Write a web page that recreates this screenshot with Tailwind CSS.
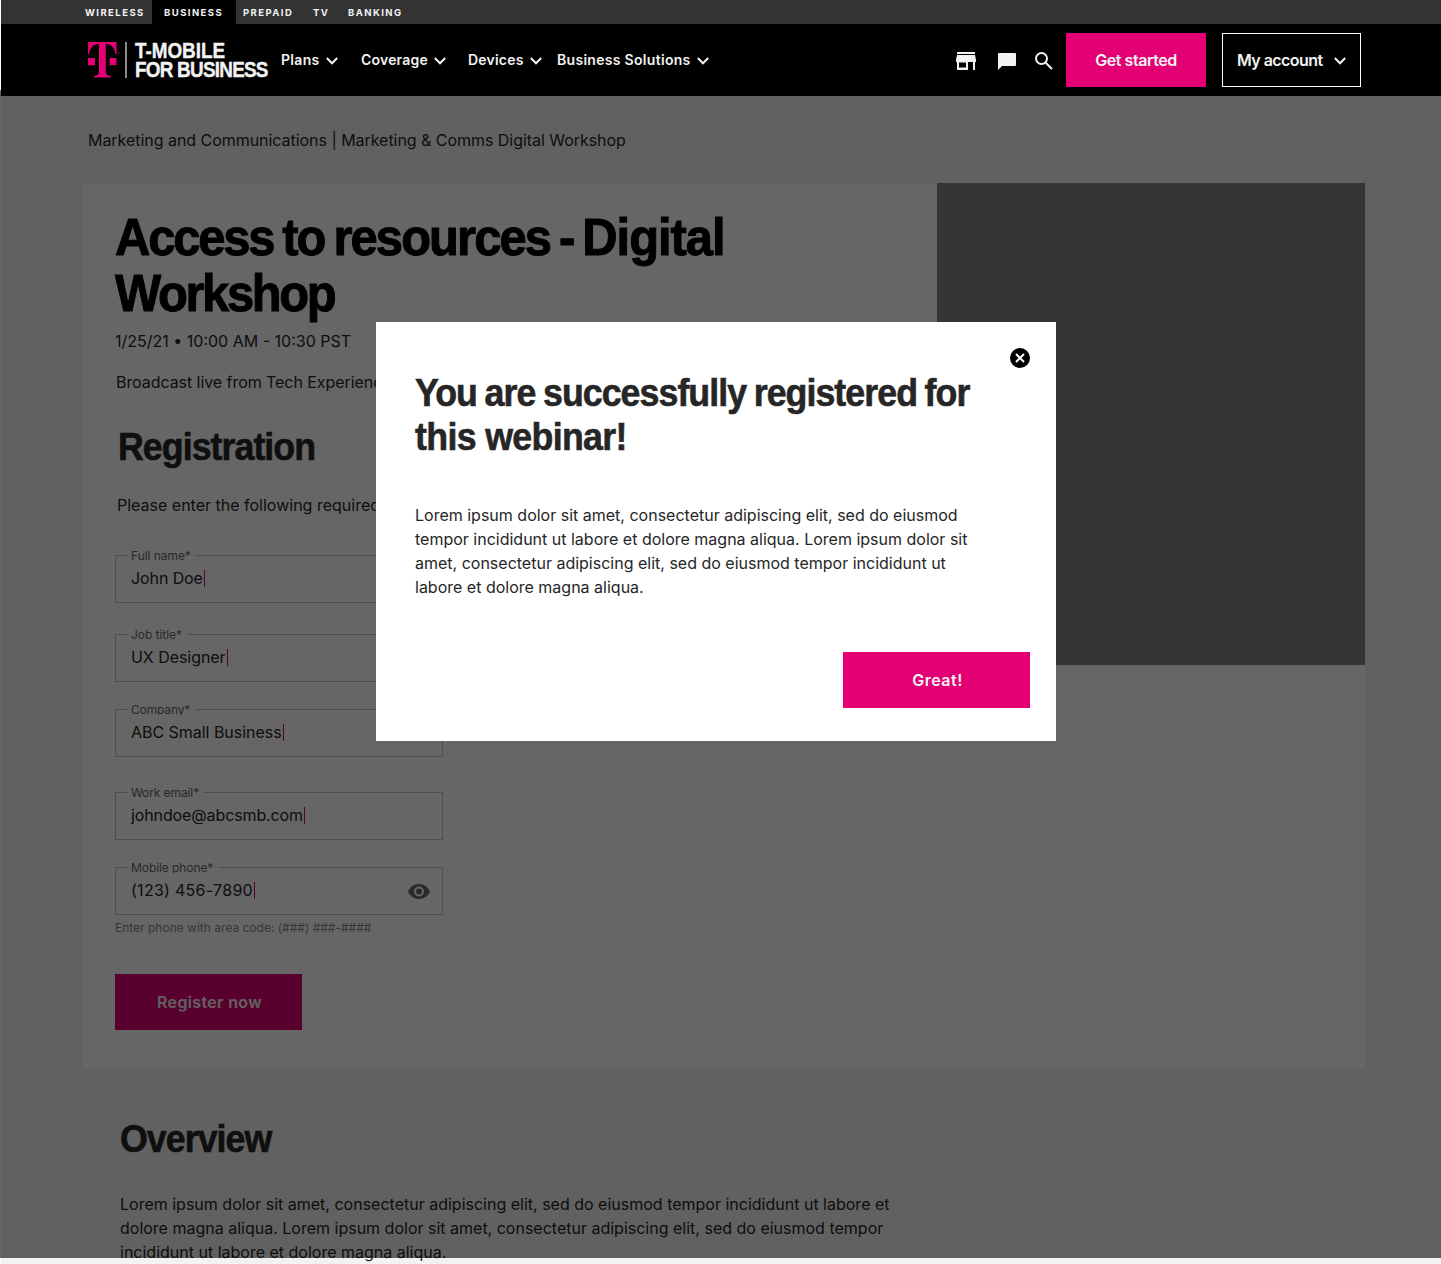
<!DOCTYPE html>
<html lang="en">
<head>
<meta charset="utf-8">
<title>T-Mobile for Business</title>
<script src="https://cdn.jsdelivr.net/npm/@tailwindcss/browser@4"></script>
</head>
<body class="h-[1264px] overflow-hidden bg-white font-['Inter',sans-serif] text-[#262626]">
<div class="relative ml-px h-[1264px] bg-[#f2f2f2]">
  <header class="relative z-20">
    <nav class="flex h-6 items-center bg-[#333] pl-[84px] text-[9.5px] font-bold leading-[25px] tracking-[1.45px] text-[#f2f2f2]">
      <a class="w-[67px]">WIRELESS</a>
      <a class="h-6 w-[84px] bg-black pl-3">BUSINESS</a>
      <a class="w-[77px] pl-[7px]">PREPAID</a>
      <a class="w-[35px]">TV</a>
      <a>BANKING</a>
    </nav>
    <div class="flex h-[72px] items-center bg-black pl-[87px] pr-20 text-[#f2f2f2]">
      <div class="flex h-9 w-[193px] items-center">
        <svg class="h-9 w-8 shrink-0" viewBox="0 0 32 36" fill="#e20074"><path d="M0 0h28.500v12h-1.200c-.7-5.500-3.300-9.600-9.500-10.200V29c0 3.400 1.200 4.600 4.900 4.800V35.500H6v-1.700c3.700-.2 4.900-1.400 4.900-4.800V1.800C4.600 2.400 1.900 6.500 1.200 12H0zM0 16h7v7.200H0zM21.500 16h7v7.200h-7zM30 10.500h1.300v1.300H30z"/></svg>
        <span class="ml-[5px] h-9 w-[2px] shrink-0 bg-[#8c8c8c]"></span>
        <div class="ml-2 origin-left scale-x-[.84] whitespace-nowrap font-['Liberation_Sans',sans-serif] text-[22.500px] font-bold leading-[19px] [-webkit-text-stroke:.4px_#f2f2f2]"><span class="tracking-[-.05px]">T-MOBILE</span><br><span class="tracking-[-.9px]">FOR BUSINESS</span></div>
      </div>
      <nav class="flex items-center whitespace-nowrap text-[14px] font-semibold leading-5 tracking-[.3px]">
        <a class="flex w-20 items-center"><span class="w-[45px]">Plans</span><svg class="mt-px h-2 w-3" viewBox="0 0 12 8" fill="none" stroke="#f2f2f2" stroke-width="2"><path d="M.8 1 6 6.300 11.200 1"/></svg></a>
        <a class="flex w-[107px] items-center"><span class="w-[73px] tracking-[.2px]">Coverage</span><svg class="mt-px h-2 w-3" viewBox="0 0 12 8" fill="none" stroke="#f2f2f2" stroke-width="2"><path d="M.8 1 6 6.300 11.200 1"/></svg></a>
        <a class="flex w-[89px] items-center"><span class="w-[62px] tracking-[.2px]">Devices</span><svg class="mt-px h-2 w-3" viewBox="0 0 12 8" fill="none" stroke="#f2f2f2" stroke-width="2"><path d="M.8 1 6 6.300 11.200 1"/></svg></a>
        <a class="flex items-center"><span class="w-[140px]">Business Solutions</span><svg class="mt-px h-2 w-3" viewBox="0 0 12 8" fill="none" stroke="#f2f2f2" stroke-width="2"><path d="M.8 1 6 6.300 11.200 1"/></svg></a>
      </nav>
      <div class="ml-auto flex items-center">
        <svg class="mr-[22px] mt-[2px] h-[18px] w-5" viewBox="0 0 20 18" fill="#f2f2f2"><path fill-rule="evenodd" d="M1 0h18v2H1zM1 3h18l1 5v2h-1v8h-2v-8h-5v8H1v-8H0V8zM3 10.500v5h7v-5z"/></svg>
        <svg class="mr-[19px] mt-[2px] h-[18px] w-[18px]" viewBox="0 0 18 18" fill="#f2f2f2"><path d="M1 1h16a1 1 0 0 1 1 1v11a1 1 0 0 1-1 1H4l-4 4V2a1 1 0 0 1 1-1z"/></svg>
        <svg class="mr-[13px] mt-[2px] h-[18px] w-[18px]" viewBox="0 0 18 18" fill="none" stroke="#f2f2f2" stroke-width="2"><circle cx="6.500" cy="6.500" r="5.500"/><path d="m10.700 10.700 6.300 6.300"/></svg>
        <a class="mr-4 flex h-[54px] w-[140px] items-center justify-center bg-[#e20074] text-[16px] font-semibold tracking-[-.45px]">Get started</a>
        <a class="flex h-[54px] w-[139px] items-center justify-between border border-white px-[14px] text-[16px] font-semibold tracking-[-.55px]">My account<svg class="mt-px h-2 w-3" viewBox="0 0 12 8" fill="none" stroke="#f2f2f2" stroke-width="2"><path d="M.8 1 6 6.300 11.200 1"/></svg></a>
      </div>
    </div>
  </header>

  <main class="pt-8 text-[16px] leading-6">
    <p class="ml-[87px] h-[55px] tracking-[-.04px]">Marketing and Communications | Marketing &amp; Comms Digital Workshop</p>
    <section class="ml-[82px] flex h-[886px] w-[1282px] bg-white">
      <div class="w-[854px] pl-8 pt-[26px]">
        <h1 class="h-28 origin-left scale-x-[.94] whitespace-nowrap font-['Liberation_Sans',sans-serif] text-[52px] font-bold leading-[56px] tracking-[-2px] text-black [-webkit-text-stroke:1px_#000] [word-spacing:-3px]"><span class="tracking-[-2.300px]">Access</span> to resources - <span class="tracking-[-1.100px]">Digital</span><br><span class="tracking-[-2.500px]">Workshop</span></h1>
        <p class="mt-2">1/25/21 • 10:00 AM - 10:30 PST</p>
        <p class="ml-px mt-[17px] tracking-[-.06px]">Broadcast live from Tech Experience</p>
        <h2 class="ml-[3px] mt-[31px] h-11 origin-left scale-x-[.94] whitespace-nowrap font-['Liberation_Sans',sans-serif] text-[38px] font-bold leading-[44px] tracking-[-1px] [-webkit-text-stroke:.6px_#262626]">Registration</h2>
        <p class="ml-[2px] mt-6">Please enter the following required</p>
        <form class="mt-[38px] w-[328px]">
          <div class="relative mb-[31px] h-12 border border-[#c6c6c6] px-[15px] pt-[10px]">
            <label class="absolute -top-2 left-3 h-4 overflow-hidden bg-white pl-[3px] pr-[5px] text-[12px] leading-4 tracking-[-.05px] text-[#6a6a6a]">Full name*</label>
            <span class="flex items-center tracking-[-.1px]">John Doe<i class="ml-px h-[17px] w-px bg-[#e20074]"></i></span>
          </div>
          <div class="relative mb-[27px] h-12 border border-[#c6c6c6] px-[15px] pt-[10px]">
            <label class="absolute -top-2 left-3 h-4 overflow-hidden bg-white pl-[3px] pr-[5px] text-[12px] leading-4 tracking-[-.05px] text-[#6a6a6a]">Job title*</label>
            <span class="flex items-center tracking-[-.05px]">UX Designer<i class="ml-px h-[17px] w-px bg-[#e20074]"></i></span>
          </div>
          <div class="relative mb-[35px] h-12 border border-[#c6c6c6] px-[15px] pt-[10px]">
            <label class="absolute -top-2 left-3 h-[13px] overflow-hidden bg-white pl-[3px] pr-[5px] text-[12px] leading-4 tracking-[-.15px] text-[#6a6a6a]">Company*</label>
            <span class="flex items-center tracking-[-.03px]">ABC Small Business<i class="ml-px h-[17px] w-px bg-[#e20074]"></i></span>
          </div>
          <div class="relative mb-[27px] h-12 border border-[#c6c6c6] px-[15px] pt-[10px]">
            <label class="absolute -top-2 left-3 h-4 overflow-hidden bg-white pl-[3px] pr-[5px] text-[12px] leading-4 tracking-[-.1px] text-[#6a6a6a]">Work email*</label>
            <span class="flex items-center tracking-[-.12px]">johndoe@abcsmb.com<i class="ml-px h-[17px] w-px bg-[#e20074]"></i></span>
          </div>
          <div class="relative flex h-12 items-start justify-between border border-[#c6c6c6] pl-[15px] pr-3 pt-[10px]">
            <label class="absolute -top-2 left-3 h-[13px] overflow-hidden bg-white pl-[3px] pr-[5px] text-[12px] leading-4 tracking-[-.08px] text-[#6a6a6a]">Mobile phone*</label>
            <span class="flex items-center tracking-[.28px]">(123) 456-7890<i class="ml-px h-[17px] w-px bg-[#e20074]"></i></span>
            <svg class="mt-[6px] h-[15px] w-[22px]" viewBox="0 0 22 15" fill="#6a6a6a"><path fill-rule="evenodd" d="M11 0C6 0 1.730 3.110 0 7.500 1.730 11.890 6 15 11 15s9.270-3.110 11-7.500C20.270 3.110 16 0 11 0zm0 12.500a5 5 0 1 1 0-10 5 5 0 0 1 0 10zm0-8a3 3 0 1 0 0 6 3 3 0 0 0 0-6z"/></svg>
          </div>
          <p class="mt-[5px] text-[12px] leading-4 text-[#8a8a8a]">Enter phone with area code: (###) ###-####</p>
          <a class="mt-[38px] flex h-14 w-[187px] items-center justify-center bg-[#e20074] pl-[2px] font-semibold tracking-[.35px] text-[#f2f2f2]">Register now</a>
        </form>
      </div>
      <div class="h-[482px] w-[428px] bg-[#868686]"></div>
    </section>
    <h2 class="ml-[119px] mt-12 h-11 origin-left scale-x-[.94] whitespace-nowrap font-['Liberation_Sans',sans-serif] text-[38px] font-bold leading-[44px] tracking-[-1px] [-webkit-text-stroke:.6px_#262626]">Overview</h2>
    <p class="ml-[119px] mt-[31px] whitespace-nowrap">Lorem ipsum dolor sit amet, consectetur adipiscing elit, sed do eiusmod tempor incididunt ut labore et<br>dolore magna aliqua. Lorem ipsum dolor sit amet, consectetur adipiscing elit, sed do eiusmod tempor<br>incididunt ut labore et dolore magna aliqua.</p>
  </main>
</div>

<div class="absolute left-0 top-[90px] z-10 h-[1168px] w-full bg-black/60"></div>

<div class="absolute left-[376px] top-[322px] z-30 h-[419px] w-[680px] bg-white pl-[39px] pr-[26px] pt-[26px]">
  <svg class="ml-auto h-5 w-5" viewBox="0 0 20 20"><circle cx="10" cy="10" r="10"/><path d="m6 6 8 8m0-8-8 8" stroke="#fff" stroke-width="2"/></svg>
  <h2 class="mt-[3px] h-[88px] origin-left scale-x-[.94] whitespace-nowrap font-['Liberation_Sans',sans-serif] text-[38px] font-bold leading-[44px] tracking-[-1px] [-webkit-text-stroke:.6px_#262626]"><span class="[word-spacing:-1.500px]">You are successfully registered for</span><br><span class="tracking-[-.7px]">this webinar!</span></h2>
  <p class="mt-[44px] whitespace-nowrap text-[16px] leading-6">Lorem ipsum dolor sit amet, consectetur adipiscing elit, sed do eiusmod<br>tempor incididunt ut labore et dolore magna aliqua. Lorem ipsum dolor sit<br>amet, consectetur adipiscing elit, sed do eiusmod tempor incididunt ut<br>labore et dolore magna aliqua.</p>
  <a class="ml-auto mt-[53px] flex h-14 w-[187px] items-center justify-center bg-[#e20074] pl-[2px] text-[16px] font-semibold tracking-[.5px] text-[#f2f2f2]">Great!</a>
</div>
</body>
</html>
